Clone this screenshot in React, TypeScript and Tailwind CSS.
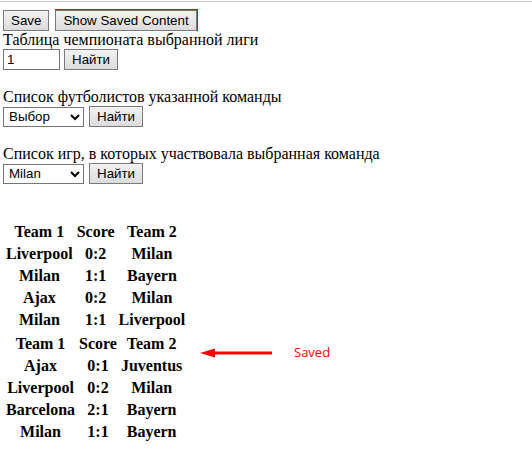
import { useState } from 'react';

type Game = { t1: string; score: string; t2: string };

const played: Game[] = [
  { t1: 'Liverpool', score: '0:2', t2: 'Milan' },
  { t1: 'Milan', score: '1:1', t2: 'Bayern' },
  { t1: 'Ajax', score: '0:2', t2: 'Milan' },
  { t1: 'Milan', score: '1:1', t2: 'Liverpool' },
];

const saved: Game[] = [
  { t1: 'Ajax', score: '0:1', t2: 'Juventus' },
  { t1: 'Liverpool', score: '0:2', t2: 'Milan' },
  { t1: 'Barcelona', score: '2:1', t2: 'Bayern' },
  { t1: 'Milan', score: '1:1', t2: 'Bayern' },
];

const btn =
  "h-[21px] px-[7px] border border-[#7a7a7a] bg-gradient-to-b from-[#f2f2f2] to-[#dcdcdc] font-['Liberation_Sans',Arial,sans-serif] text-[13.33px] leading-none text-black";

const field =
  "h-[20px] border border-[#767676] bg-white font-['Liberation_Sans',Arial,sans-serif] text-[13.33px] text-black";

function GamesTable({ games }: { games: Game[] }) {
  return (
    <table className="border-separate border-spacing-[2px] ml-[3px]">
      <tbody>
        <tr>
          <th className="px-px py-px text-center font-bold leading-[18px]">Team 1</th>
          <th className="px-px py-px text-center font-bold leading-[18px]">Score</th>
          <th className="px-px py-px text-center font-bold leading-[18px]">Team 2</th>
        </tr>
        {games.map((g, i) => (
          <tr key={i}>
            <th className="px-px py-px text-center font-bold leading-[18px]">{g.t1}</th>
            <th className="px-px py-px text-center font-bold leading-[18px]">{g.score}</th>
            <th className="px-px py-px text-center font-bold leading-[18px]">{g.t2}</th>
          </tr>
        ))}
      </tbody>
    </table>
  );
}

export default function App() {
  const [league, setLeague] = useState('1');
  const [team, setTeam] = useState('Выбор');
  const [gamesTeam, setGamesTeam] = useState('Milan');

  return (
    <div className="relative h-[462px] w-[532px] overflow-hidden bg-white font-['Liberation_Serif','Times_New_Roman',serif] text-[16px] text-black">
      {/* top rule */}
      <div className="mt-px h-px bg-[#c6c6c6]" />

      <div className="flex items-end gap-[6px] pl-[3px] pt-[7px]">
        <button className={btn}>Save</button>
        {/* red marker on the top and right edge */}
        <div className="flex bg-[#ff0000] pt-px pr-px">
          <button className={btn}>Show Saved Content</button>
        </div>
      </div>

      <div className="pl-[3px] leading-[18px]">Таблица чемпионата выбранной лиги</div>
      <div className="flex items-center gap-[4px] pl-[3px]">
        <input
          value={league}
          onChange={(e) => setLeague(e.target.value)}
          className={field + ' w-[57px] h-[21px] px-[3px] outline-none'}
        />
        <button className={btn}>Найти</button>
      </div>

      <div className="mt-[18px] pl-[3px] leading-[18px]">Список футболистов указанной команды</div>
      <div className="flex items-center gap-[5px] pl-[3px]">
        <select value={team} onChange={(e) => setTeam(e.target.value)} className={field + ' w-[81px] pl-[1px]'}>
          <option>Выбор</option>
          <option>Milan</option>
        </select>
        <button className={btn}>Найти</button>
      </div>

      <div className="mt-[18px] pl-[3px] leading-[18px]">Список игр, в которых участвовала выбранная команда</div>
      <div className="flex items-center gap-[5px] pl-[3px]">
        <select value={gamesTeam} onChange={(e) => setGamesTeam(e.target.value)} className={field + ' w-[81px] pl-[1px]'}>
          <option>Milan</option>
          <option>Ajax</option>
          <option>Bayern</option>
        </select>
        <button className={btn}>Найти</button>
      </div>

      <div className="mt-[36px]">
        <GamesTable games={played} />
        <GamesTable games={saved} />
      </div>

      {/* annotation */}
      <div className="absolute left-[200px] top-[343px] flex items-center">
        <svg width="74" height="12" viewBox="0 0 74 12">
          <path d="M0 6 L15 1.5 L15 10.5 Z" fill="#ff0000" />
          <line x1="12" y1="6" x2="72" y2="6" stroke="#ff0000" strokeWidth="3" />
        </svg>
        <span className="ml-[20px] font-['Open_Sans',sans-serif] text-[13px] text-[#ff0000]">Saved</span>
      </div>
    </div>
  );
}
